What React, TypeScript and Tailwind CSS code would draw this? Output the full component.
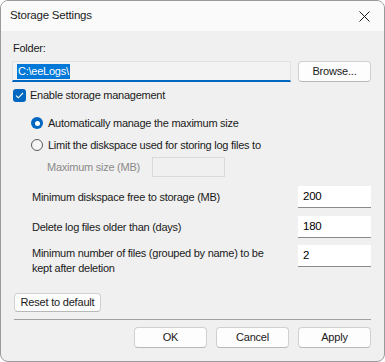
import React from "react";

const font = "font-['Liberation_Sans',Arial,sans-serif]";

function Btn({ children, className = "" }: { children: React.ReactNode; className?: string }) {
  return (
    <div
      className={`flex items-center justify-center whitespace-nowrap rounded-[4px] border border-[#d0d0d0] border-b-[#b8b8b8] bg-[#fdfdfd] text-[11px] tracking-[-0.2px] text-[#1a1a1a] ${className}`}
    >
      {children}
    </div>
  );
}

function Input({ value }: { value: string }) {
  return (
    <div className="flex h-[22px] w-[73px] shrink-0 items-center border-b border-b-[#8a8a8a] bg-white pl-[5px] text-[11.5px] text-black">
      {value}
    </div>
  );
}

export default function App() {
  return (
    <div className={`h-[362px] w-[385px] bg-white ${font}`}>
      <div className="flex h-[362px] w-[385px] flex-col overflow-hidden rounded-[8px] border border-[#9a9a9a] bg-[#f0f0f0]">
        {/* title bar */}
        <div className="flex h-[30px] shrink-0 items-center justify-between bg-[#fafafa] pl-[9px] pr-[14px]">
          <span className="text-[11.5px] tracking-[-0.2px] text-[#1a1a1a]">Storage Settings</span>
          <svg width="11" height="11" viewBox="0 0 11 11" className="mt-[1px]">
            <path d="M0.5 0.5 L10.5 10.5 M10.5 0.5 L0.5 10.5" stroke="#1a1a1a" strokeWidth="1" />
          </svg>
        </div>

        <div className="flex flex-1 flex-col whitespace-nowrap pl-[11px] pr-[13px] text-[11px] leading-[15px] tracking-[-0.25px] text-[#1a1a1a]">
          <div className="mt-[10px] h-[15px] pl-[1px]">Folder:</div>
          <div className="mt-[5px] flex h-[21px] items-stretch gap-[7px]">
            <div className="flex w-[279px] items-center border border-[#e2e2e2] border-b-2 border-b-[#0067c0] bg-[#f3f3f3] pl-[4px]">
              <span className="bg-[#0078d7] px-[1px] leading-[15px] text-white">C:\eeLogs\</span>
            </div>
            <Btn className="h-[21px] w-[73px]">Browse...</Btn>
          </div>

          <div className="mt-[7px] flex h-[13px] items-center gap-[4px] pl-[1px]">
            <div className="flex h-[13px] w-[13px] items-center justify-center rounded-[3px] bg-[#0067c0]">
              <svg width="9" height="7" viewBox="0 0 9 7">
                <path d="M1 3.6 L3.3 5.8 L8 1" stroke="white" strokeWidth="1.1" fill="none" />
              </svg>
            </div>
            <span>Enable storage management</span>
          </div>

          <div className="mt-[15px] flex h-[12px] items-center gap-[5px] pl-[19px]">
            <div className="flex h-[12px] w-[12px] items-center justify-center rounded-full bg-[#0067c0]">
              <div className="h-[5px] w-[5px] rounded-full bg-white" />
            </div>
            <span>Automatically manage the maximum size</span>
          </div>

          <div className="mt-[10px] flex h-[12px] items-center gap-[5px] pl-[19px]">
            <div className="h-[12px] w-[12px] rounded-full border border-[#5c5c5c] bg-[#f6f6f6]" />
            <span>Limit the diskspace used for storing log files to</span>
          </div>

          <div className="mt-[6px] flex h-[20px] items-center pl-[35px]">
            <span className="w-[105px] text-[#8a8a8a]">Maximum size (MB)</span>
            <div className="h-[20px] w-[73px] border border-[#dadada] bg-[#f0f0f0]" />
          </div>

          <div className="mt-[9px] flex items-center justify-between pl-[20px]">
            <span>Minimum diskspace free to storage (MB)</span>
            <Input value="200" />
          </div>

          <div className="mt-[8px] flex items-center justify-between pl-[20px]">
            <span>Delete log files older than (days)</span>
            <Input value="180" />
          </div>

          <div className="mt-[7px] flex items-start justify-between pl-[20px]">
            <span className="mt-[1px] w-[245px] whitespace-normal leading-[15px]">
              Minimum number of files (grouped by name) to be kept after deletion
            </span>
            <Input value="2" />
          </div>

          <div className="mt-[17px] flex">
            <Btn className="ml-[2px] h-[19px] w-[87px]">Reset to default</Btn>
          </div>

          <div className="mt-[7px] ml-[2px] h-px w-[357px] bg-[#a0a0a0]" />

          <div className="mt-[7px] flex justify-end gap-[9px]">
            <Btn className="h-[21px] w-[73px]">OK</Btn>
            <Btn className="h-[21px] w-[73px]">Cancel</Btn>
            <Btn className="h-[21px] w-[73px]">Apply</Btn>
          </div>
        </div>
      </div>
    </div>
  );
}
